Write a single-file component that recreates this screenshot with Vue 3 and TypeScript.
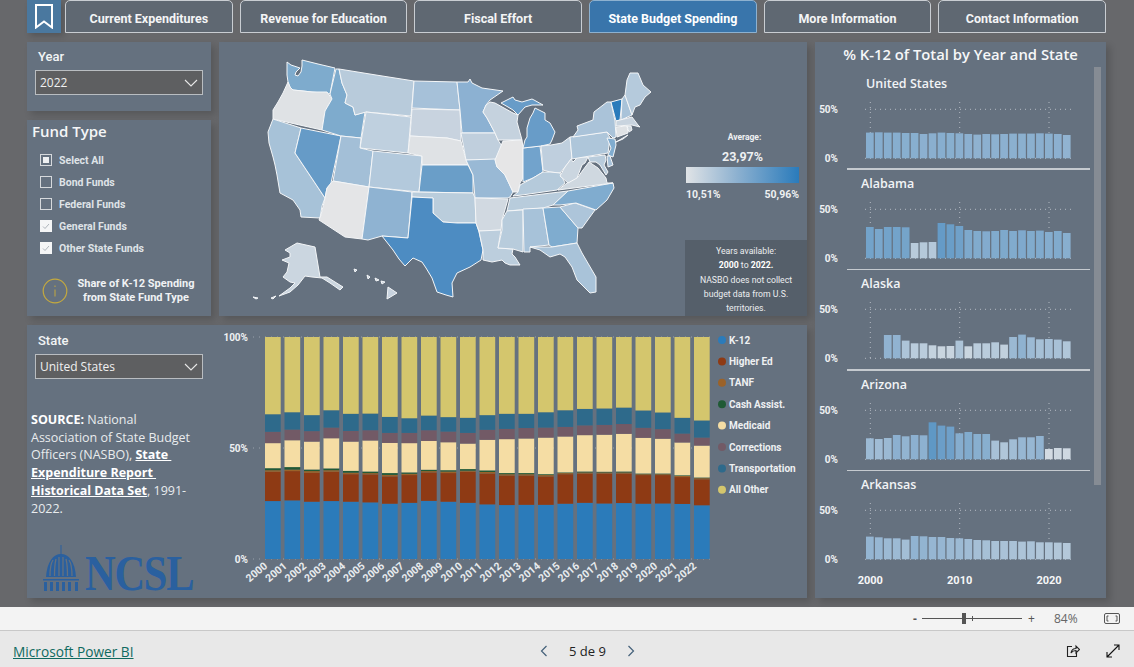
<template>
  <div class="page">
    <main class="report">
      <nav class="tabs">
        <button class="bookmark" aria-label="Bookmarks">
          <svg width="18" height="25" viewBox="0 0 18 25"><path d="M1 1h16v22.5l-8-6-8 6z" fill="none" stroke="#fff" stroke-width="2" /></svg>
        </button>
        <button v-for="tab in tabs" :key="tab" class="tab" :class="{ active: tab === 'State Budget Spending' }">{{ tab }}</button>
      </nav>

      <div class="body">
        <div class="left">
          <div class="top-row">
            <aside class="filters">
              <section class="panel year">
                <label class="slicer-label">Year</label>
                <div class="select">
                  <span>2022</span>
                  <svg width="14" height="8" viewBox="0 0 14 8"><path d="M1 1l6 6 6-6" fill="none" stroke="#e8e8e8" stroke-width="1.1" /></svg>
                </div>
              </section>
              <section class="panel funds">
                <h2>Fund Type</h2>
                <ul>
                  <li v-for="f in funds" :key="f.name">
                    <span class="box" :class="f.state">
                      <svg v-if="f.state === 'checked'" width="12" height="12" viewBox="0 0 12 12"><path d="M3 6.5l2 2 4-4.5" fill="none" stroke="#9aa2aa" stroke-width="0.8" /></svg>
                    </span>
                    {{ f.name }}
                  </li>
                </ul>
                <div class="info">
                  <svg width="26" height="26" viewBox="0 0 26 26">
                    <circle cx="13" cy="13" r="11.8" fill="none" stroke="#c4a93f" stroke-width="1.2" />
                    <path d="M13 11.5v7M13 7.5v1.5" stroke="#c4a93f" stroke-width="1" />
                  </svg>
                  <p>Share of K-12 Spending<br />from State Fund Type</p>
                </div>
              </section>
            </aside>

            <section class="panel map">
              <svg class="us" width="588" height="274" viewBox="219 42 588 274">
                <polygon v-for="s in states" :key="s.id" :points="s.pts" :fill="s.fill" stroke="#f4f6f8" stroke-width="1" stroke-linejoin="round" />
              </svg>
              <div class="legend">
                <div class="avg-label">Average:</div>
                <div class="avg">23,97%</div>
                <div class="ramp"></div>
                <div class="ramp-labels"><span>10,51%</span><span>50,96%</span></div>
              </div>
              <div class="note">
                Years available:<br />
                <b>2000</b> to <b>2022.</b><br />
                NASBO does not collect budget data from U.S. territories.
              </div>
            </section>
          </div>

          <section class="panel bottom">
            <div class="state-col">
              <label class="slicer-label">State</label>
              <div class="select">
                <span>United States</span>
                <svg width="14" height="8" viewBox="0 0 14 8"><path d="M1 1l6 6 6-6" fill="none" stroke="#e8e8e8" stroke-width="1.1" /></svg>
              </div>
              <p class="source">
                <b>SOURCE:</b> National Association of State Budget Officers (NASBO), <a href="#"><b>State&nbsp; Expenditure Report&nbsp; Historical Data Set</b></a>, 1991-2022.
              </p>
              <div class="logo">
                <svg width="36" height="46" viewBox="0 0 36 46">
                  <path d="M17.5 0h1v10h-1z" fill="#2a609f" />
                  <path d="M18 9c-8 0-14 8-15 23h30c-1-15-7-23-15-23z" fill="#2a609f" />
                  <path d="M7 31c0-8 1-13 3-16M11.5 31c0-8 .5-13 1.5-17M16 31V12M20 31V12M24.5 31c0-8-.5-13-1.5-17M29 31c0-8-1-13-3-16" stroke="#65717f" stroke-width="1.3" fill="none" />
                  <path d="M0 34h36v1.5H0zM1 37h3v9H1zM7 37h3v9H7zM13 37h3v9h-3zM19 37h3v9h-3zM25 37h3v9h-3zM32 37h3v9h-3z" fill="#2a609f" />
                </svg>
                <span>NCSL</span>
              </div>
            </div>

            <svg class="stack" width="585" height="273" viewBox="222 325 585 273">
              <g v-for="t in stackTicks" :key="t.label">
                <text x="248" :y="t.y + 3.5" text-anchor="end" class="axis">{{ t.label }}</text>
                <line x1="253" :x2="712" :y1="t.y" :y2="t.y" stroke="#9aa3ad" stroke-width="1" stroke-dasharray="1 5" />
              </g>
              <g v-for="(bar, i) in stackBars" :key="bar.year">
                <rect v-for="(seg, j) in bar.segs" :key="j" :x="seg.x" :y="seg.y" width="15.7" :height="seg.h" :fill="seg.fill" />
                <text class="year-label" text-anchor="end" :transform="`translate(${268 + i * 19.5} 567) rotate(-40)`">{{ bar.year }}</text>
              </g>
              <g v-for="(l, i) in legend" :key="l.name">
                <circle cx="722" :cy="340 + i * 21.4" r="4" :fill="l.color" />
                <text x="729" :y="343.5 + i * 21.4" class="axis">{{ l.name }}</text>
              </g>
            </svg>
          </section>
        </div>

        <section class="panel multiples">
          <h2>% K-12 of Total by Year and State</h2>
          <div class="scrollbar"></div>
          <div class="list">
            <article v-for="(r, n) in rows" :key="r.name" class="row">
              <h3 :class="{ first: n === 0 }">{{ r.name }}</h3>
              <svg width="279" height="72" viewBox="0 0 279 72">
                <text x="23" y="20" text-anchor="end" class="axis">50%</text>
                <text x="23" y="69" text-anchor="end" class="axis">0%</text>
                <line x1="50" x2="258" y1="16.3" y2="16.3" class="dots" />
                <line v-for="x in gridX" :key="x" :x1="x" :x2="x" y1="9" y2="65" class="dots" />
                <line x1="50" x2="258" y1="65.3" y2="65.3" class="dots" />
                <template v-for="(h, i) in r.bars" :key="i">
                  <rect v-if="h > 0" :x="51 + i * 8.95" :y="65.3 - h" width="7.7" :height="h" :fill="barColor(h)" />
                </template>
              </svg>
              <div v-if="n < rows.length - 1" class="rule"></div>
            </article>
          </div>
          <div class="x-axis"><span>2000</span><span>2010</span><span>2020</span></div>
        </section>
      </div>
    </main>

    <div class="zoombar">
      <span class="minus">-</span>
      <div class="track"><i class="tick"></i><i class="thumb"></i></div>
      <span class="plus">+</span>
      <span class="pct">84%</span>
      <svg width="16" height="11" viewBox="0 0 16 11">
        <rect x="0.5" y="0.5" width="15" height="10" rx="1.5" fill="none" stroke="#555" />
        <path d="M4.5 3H3v5h1.5M11.5 3H13v5h-1.5" fill="none" stroke="#555" />
      </svg>
    </div>

    <footer class="footer">
      <a href="#" class="brand">Microsoft Power BI</a>
      <div class="pager">
        <svg width="8" height="12" viewBox="0 0 8 12"><path d="M6.500 1l-5 5 5 5" fill="none" stroke="#44617a" stroke-width="1.2" /></svg>
        <span>5 de 9</span>
        <svg width="8" height="12" viewBox="0 0 8 12"><path d="M1.500 1l5 5-5 5" fill="none" stroke="#44617a" stroke-width="1.2" /></svg>
      </div>
      <div class="actions">
        <svg width="14" height="14" viewBox="0 0 14 14">
          <path d="M6 2.500H1.500v10h9V9" fill="none" stroke="#222" stroke-width="1.1" />
          <path d="M5 9c.5-3 2.500-4.500 5-4.500V2l3.500 3.500L10 9V6.500C8 6.500 6 7.500 5 9z" fill="none" stroke="#222" stroke-width="1.1" />
        </svg>
        <svg width="14" height="14" viewBox="0 0 14 14">
          <path d="M1 13L13 1M8 1h5v5M1 8v5h5" fill="none" stroke="#111" stroke-width="1.1" />
        </svg>
      </div>
    </footer>
  </div>
</template>

<script setup lang="ts">
const tabs = [
  "Current Expenditures",
  "Revenue for Education",
  "Fiscal Effort",
  "State Budget Spending",
  "More Information",
  "Contact Information",
];

const funds = [
  { name: "Select All", state: "partial" },
  { name: "Bond Funds", state: "" },
  { name: "Federal Funds", state: "" },
  { name: "General Funds", state: "checked" },
  { name: "Other State Funds", state: "checked" },
];

// outlines are in page pixels, the svg viewBox starts at the panel corner
const states = [
  { id: "WA", fill: "#7eabcd", pts: "287,62 291,65 297,67 300,68 296,72 295,75 298,76 301,72 302,66 302,60 318,64 335,68 330,94 322,93 312,92 303,91 293,90 290,87 288,82 287,75" },
  { id: "OR", fill: "#dfe2e5", pts: "288,82 290,87 293,90 303,91 312,92 327,92 332,99 325,111 322,130 273,119 273,110 278,102 283,93" },
  { id: "CA", fill: "#a7c2d8", pts: "273,119 301,128 295,153 325,198 322,206 320,218 301,217 300,210 293,200 280,193 277,175 275,165 273,157 269,143 268,132" },
  { id: "NV", fill: "#669bc7", pts: "301,128 341,136 331,183 327,188 325,198 295,153" },
  { id: "ID", fill: "#7eabcd", pts: "336,69 339,69 342,83 347,95 345,103 353,107 355,115 365,112 361,138 341,136 322,130 325,111 332,99 330,94" },
  { id: "MT", fill: "#b8cbdb", pts: "339,69 376,75 414,81 411,116 366,112 355,115 353,107 345,103 347,95 342,83" },
  { id: "WY", fill: "#bfd0df", pts: "366,112 411,117 408,153 360,148" },
  { id: "UT", fill: "#a3bfd7", pts: "341,136 361,138 360,148 373,151 369,187 333,181" },
  { id: "CO", fill: "#b3c9dc", pts: "373,151 422,156 419,192 369,187" },
  { id: "AZ", fill: "#e4e5e7", pts: "333,181 369,187 362,239 345,237 319,220 321,215 325,198 327,188" },
  { id: "NM", fill: "#8fb3d2", pts: "369,187 412,192 408,238 382,236 368,240 362,239" },
  { id: "ND", fill: "#a6c1d9", pts: "414,81 457,82 460,110 412,108" },
  { id: "SD", fill: "#c8d3df", pts: "412,109 460,110 461,133 461,141 447,138 410,136" },
  { id: "NE", fill: "#dfe2e5", pts: "410,136 447,138 461,141 466,160 468,165 422,165 422,156 408,153" },
  { id: "KS", fill: "#6a9ec8", pts: "422,165 468,165 473,175 473,193 419,192" },
  { id: "OK", fill: "#bacddc", pts: "412,192 473,193 475,198 476,223 457,223 443,222 433,213 433,198 412,197" },
  { id: "TX", fill: "#4d8cc2", pts: "412,197 433,198 433,213 443,222 457,223 476,223 479,232 483,250 481,260 470,267 457,273 452,283 453,297 446,295 437,292 432,278 426,268 422,262 413,258 405,266 399,259 393,250 382,236 408,238" },
  { id: "MN", fill: "#8cb1d2", pts: "457,82 468,82 470,79 472,83 482,88 503,91 490,100 486,105 483,112 487,118 495,133 462,133 460,110" },
  { id: "IA", fill: "#c0cfdd", pts: "461,133 495,133 498,140 503,148 495,160 466,160" },
  { id: "MO", fill: "#99b9d5", pts: "466,160 495,159 497,167 505,175 513,192 510,197 508,198 475,198 473,175" },
  { id: "AR", fill: "#d1d9e1", pts: "475,198 508,199 502,220 501,230 479,231 476,223" },
  { id: "LA", fill: "#bccedd", pts: "479,231 501,230 498,248 513,249 512,254 515,257 520,265 510,265 505,263 502,260 492,262 483,260 483,250" },
  { id: "WI", fill: "#c5d2de", pts: "486,105 490,102 495,103 513,113 518,115 517,122 522,140 503,140 498,140 495,133 487,118 483,112" },
  { id: "IL", fill: "#e6e6e7", pts: "503,141 522,140 523,148 523,178 520,183 518,192 513,192 505,175 497,167 495,160" },
  { id: "IN", fill: "#72a3cc", pts: "523,148 540,146 543,172 533,178 523,182" },
  { id: "MIU", fill: "#689cc8", pts: "501,103 513,97 515,100 522,102 532,99 534,100 543,105 532,105 525,107 518,115 513,110 508,107" },
  { id: "MIL", fill: "#689cc8", pts: "527,137 527,128 530,118 533,113 535,108 545,113 545,120 550,123 555,132 552,140 550,144 541,146 523,148 525,140" },
  { id: "OH", fill: "#bfcfde", pts: "541,146 551,145 562,143 570,137 572,158 565,167 560,173 550,172 543,170" },
  { id: "KY", fill: "#b5cadb", pts: "520,185 533,178 543,172 550,172 560,173 565,183 557,190 522,195 513,196 518,192" },
  { id: "TN", fill: "#b8ccdc", pts: "510,198 568,191 553,205 543,208 507,211" },
  { id: "MS", fill: "#b8ccdc", pts: "507,211 523,210 523,252 513,249 498,248 502,230 502,220" },
  { id: "AL", fill: "#a7c2d9", pts: "523,209 543,208 549,245 530,247 530,252 524,252" },
  { id: "GA", fill: "#7faccf", pts: "543,208 560,207 578,228 577,243 552,247 549,245" },
  { id: "FL", fill: "#a9c3d9", pts: "530,247 552,247 577,243 582,253 589,265 596,277 596,292 590,293 584,287 577,280 572,267 565,257 560,254 550,257 540,250" },
  { id: "SC", fill: "#adc5da", pts: "560,207 575,203 595,210 582,228 578,228" },
  { id: "NC", fill: "#80accf", pts: "553,205 568,191 613,183 614,188 607,200 596,210 576,203 560,205" },
  { id: "VA", fill: "#cfd8e0", pts: "558,190 567,183 578,177 583,170 589,162 598,168 606,178 607,183 613,183" },
  { id: "WV", fill: "#cbd6e0", pts: "560,176 565,167 571,159 573,162 578,157 588,157 585,163 582,165 577,178 568,183" },
  { id: "PA", fill: "#aec6da", pts: "570,137 607,132 610,138 608,153 572,159" },
  { id: "NY", fill: "#aac3d9", pts: "573,137 578,130 577,126 593,120 594,112 607,102 611,102 615,121 616,137 613,138 607,132" },
  { id: "NJ", fill: "#80accf", pts: "607,138 615,139 616,145 613,157 608,155 611,148" },
  { id: "MD", fill: "#b9ccdc", pts: "588,157 605,155 606,160 604,165 608,172 606,175 600,165 596,162 590,162" },
  { id: "DE", fill: "#a6c1d9", pts: "607,156 610,156 613,165 608,167" },
  { id: "VT", fill: "#2a7bbb", pts: "611,102 622,99 620,120 616,121" },
  { id: "NH", fill: "#a9c3d9", pts: "622,99 625,95 632,115 621,120" },
  { id: "ME", fill: "#b5cadc", pts: "625,95 627,80 630,73 638,73 643,85 651,92 645,97 640,105 635,107 632,115" },
  { id: "MA", fill: "#c9d4df", pts: "616,121 632,117 638,125 640,127 632,125 616,126" },
  { id: "CT", fill: "#dfe2e5", pts: "616,127 627,126 628,133 617,137" },
  { id: "RI", fill: "#d5dce2", pts: "627,126 631,126 632,130 629,132" },
  { id: "LI", fill: "#aac3d9", pts: "616,142 628,135 623,139" },
  { id: "AK", fill: "#cbd6e0", pts: "285,250 297,243 315,247 320,277 327,277 343,287 340,290 330,283 322,278 312,277 305,276 298,285 290,292 279,296 290,288 295,283 290,282 283,277 287,272 289,263 282,260 290,257 290,253" },
  { id: "AK2", fill: "#cbd6e0", pts: "253,297 258,298 256,299" },
  { id: "AK3", fill: "#cbd6e0", pts: "271,298 276,296 273,299" },
  { id: "HI1", fill: "#c8d3df", pts: "388,287 397,293 387,299" },
  { id: "HI2", fill: "#c8d3df", pts: "354,269 357,270 355,272" },
  { id: "HI3", fill: "#c8d3df", pts: "367,275 370,277 368,279" },
  { id: "HI4", fill: "#c8d3df", pts: "375,278 379,280 376,281" },
  { id: "HI5", fill: "#c8d3df", pts: "381,281 385,282 382,284" },
];

const stackColors = ["#2b7bba", "#8e3a14", "#9b6229", "#205a35", "#f5dda4", "#725a66", "#2e6a8b", "#d4c66d"];

const legend = [
  "K-12",
  "Higher Ed",
  "TANF",
  "Cash Assist.",
  "Medicaid",
  "Corrections",
  "Transportation",
  "All Other",
].map((name, i) => ({ name, color: stackColors[i] }));

// cumulative top of each band, percent
const tops = [
  [26.1, 39.3, 40, 40.9, 52.2, 57.3, 65.2],
  [26.4, 39.6, 40.3, 41.4, 53.5, 58.3, 66.1],
  [25.8, 38.8, 39.6, 40.3, 52.9, 57.6, 64.8],
  [26.1, 39.3, 40, 40.8, 54.4, 59.2, 67],
  [25.8, 38.2, 38.9, 39.7, 52.9, 57.7, 65.4],
  [25.5, 38.1, 38.7, 39.4, 53.4, 58, 65.5],
  [24.9, 37.2, 37.9, 38.7, 52.3, 56.8, 64],
  [25.3, 37.8, 38.4, 39, 52.2, 56.8, 63.4],
  [26.2, 39, 39.6, 40.2, 53.2, 58, 64.6],
  [25.8, 38.7, 39.4, 40, 52.6, 57.4, 63.9],
  [25.3, 39.3, 39.8, 40.5, 52, 56.8, 63.6],
  [24.6, 38.5, 39.2, 39.9, 53.7, 58.2, 64.8],
  [24.3, 37.6, 38.2, 38.7, 54, 58.6, 65.4],
  [24.4, 37.6, 38.2, 38.7, 54.3, 59, 65.4],
  [24.4, 37.2, 37.8, 38.2, 54.7, 59.2, 66.1],
  [24.9, 38.2, 38.7, 39, 55.2, 59.5, 67],
  [25.3, 38.5, 39, 39.4, 55.8, 60.2, 67.6],
  [25, 38.5, 39, 39.3, 56, 60.4, 67.8],
  [25.2, 38.5, 39, 39.4, 56.4, 60.8, 68.2],
  [24.9, 37.8, 38.2, 38.5, 54.6, 59.1, 66.9],
  [25, 37.8, 38.2, 38.5, 54.2, 58.5, 66],
  [24.8, 36.9, 37.4, 37.7, 52.5, 56.5, 63.6],
  [24.2, 35.9, 36.4, 36.7, 51.1, 54.7, 62.4],
];

const BASE_Y = 559;
const PX_PER_PCT = 2.22;

const stackBars = tops.map((row, i) => {
  const bounds = [0, ...row, 100];
  const segs = stackColors.map((fill, j) => ({
    fill,
    x: 265 + i * 19.5,
    y: BASE_Y - bounds[j + 1] * PX_PER_PCT,
    h: (bounds[j + 1] - bounds[j]) * PX_PER_PCT,
  }));
  return { year: 2000 + i, segs };
});

const stackTicks = [
  { label: "100%", y: 337 },
  { label: "50%", y: 448 },
  { label: "0%", y: 559 },
];

const gridX = [55.3, 144.7, 234];

// bar heights in pixels, 48.5px is the 50% line
const rows = [
  { name: "United States", bars: [25.7, 26, 25.7, 25.7, 25.3, 25.3, 24.3, 25, 25.7, 25.3, 25, 24.3, 23.7, 24.3, 24, 24.3, 24.7, 24.7, 24.7, 25, 24.7, 24.3, 23.3] },
  { name: "Alabama", bars: [31.3, 29.3, 31.3, 31.3, 31, 15.3, 16, 16.3, 35.3, 34, 32.3, 28.3, 27.3, 27, 27.3, 28.3, 27.3, 28, 27.3, 27.7, 26.3, 27.3, 25.3] },
  { name: "Alaska", bars: [0, 0, 23.3, 23.3, 17.7, 15, 15, 13, 12, 12.3, 17.7, 12, 15, 15, 16, 13.7, 21.3, 23.7, 21, 19, 19.3, 18.7, 17] },
  { name: "Arizona", bars: [21, 20.3, 21.3, 24.3, 23, 24.3, 24, 37, 33.7, 32.7, 26, 27.3, 25.3, 25.3, 18.7, 17, 20, 22, 22, 23.3, 10.3, 11.3, 11] },
  { name: "Arkansas", bars: [22.7, 22, 21, 21, 19.7, 23.3, 23, 22.3, 22.3, 21.3, 21, 20.3, 19.3, 19, 18.3, 18.3, 18.3, 17.7, 18, 17, 17, 16.7, 16.3] },
];

const ramp: [number, number[]][] = [
  [10, [211, 219, 226]],
  [24, [141, 177, 208]],
  [36, [99, 154, 198]],
  [50, [42, 123, 187]],
];

const barColor = (h: number): string => {
  let k = 0;
  while (k < ramp.length - 2 && h > ramp[k + 1][0]) k++;
  const [a, ca] = ramp[k];
  const [b, cb] = ramp[k + 1];
  const t = Math.min(1, Math.max(0, (h - a) / (b - a)));
  const c = ca.map((v, i) => Math.round(v + (cb[i] - v) * t));
  return `rgb(${c[0]},${c[1]},${c[2]})`;
};
</script>

<style>
html,
body {
  margin: 0;
  overflow: hidden;
}
</style>

<style scoped>
.page {
  width: 1134px;
  height: 667px;
  display: flex;
  flex-direction: column;
  font-family: Roboto, "Liberation Sans", sans-serif;
  background: #e8e8e8;
}
.report {
  height: 607px;
  box-sizing: border-box;
  padding: 0 28px 0 27px;
  background: #67686b;
  display: flex;
  flex-direction: column;
  gap: 9px;
}
.tabs {
  display: flex;
  gap: 7px;
  height: 33px;
}
.tab,
.bookmark {
  font: inherit;
  padding: 0;
  margin: 0;
}
.bookmark {
  width: 34px;
  margin-right: -3px;
  background: #4a789f;
  border: 0;
  display: flex;
  align-items: center;
  justify-content: center;
  box-shadow: 3px 3px 6px rgba(0, 0, 0, 0.18);
}
.tab {
  flex: 1;
  padding-top: 3px;
  background: #5f6872;
  color: #f4f5f6;
  font-size: 12.5px;
  font-weight: 700;
  border: 1px solid #c9cdd2;
  border-radius: 5px 5px 0 0;
}
.tab.active {
  background: #3975ab;
  border-color: #8db1d0;
  color: #fff;
}
.body {
  display: flex;
  gap: 8px;
  height: 556px;
}
.left {
  width: 780px;
  display: flex;
  flex-direction: column;
  gap: 9px;
}
.top-row {
  display: flex;
  gap: 8px;
  height: 274px;
}
.filters {
  width: 184px;
  display: flex;
  flex-direction: column;
  gap: 9px;
}
.panel {
  background: #65717f;
  box-shadow: 4px 4px 7px rgba(0, 0, 0, 0.16);
}
.year {
  height: 69px;
  box-sizing: border-box;
  padding: 6px 8px 0;
}
.slicer-label {
  display: block;
  height: 16px;
  margin: 1px 0 -1px 3px;
  color: #f2f4f5;
  font-size: 13px;
  font-weight: 500;
  line-height: 16px;
}
.select {
  margin-top: 6px;
  height: 25px;
  box-sizing: border-box;
  border: 1.5px solid #b9bdc1;
  background: #5e5f61;
  color: #f0f0f0;
  padding: 0 4px;
  font-family: "Open Sans", sans-serif;
  font-size: 12px;
  display: flex;
  align-items: center;
  justify-content: space-between;
}
.funds {
  flex: 1;
  padding: 1px 5px 0;
}
.funds h2 {
  margin: 0;
  color: #f4f6f7;
  font-family: "Open Sans", sans-serif;
  font-size: 15px;
  font-weight: 600;
  line-height: 20px;
}
.funds ul {
  list-style: none;
  margin: 8px 0 0 8px;
  padding: 0;
}
.funds li {
  height: 22px;
  display: flex;
  align-items: center;
  gap: 7px;
  color: #dfe3e7;
  font-size: 10.5px;
  font-weight: 700;
}
.box {
  width: 12px;
  height: 12px;
  box-sizing: border-box;
  border: 1px solid #d6d9dc;
  display: flex;
  align-items: center;
  justify-content: center;
}
.box.checked {
  background: #f4f5f6;
  border: 0;
}
.box.partial::after {
  content: "";
  width: 6px;
  height: 6px;
  background: #eef0f2;
}
.info {
  margin: 18px 0 0 10px;
  display: flex;
  align-items: center;
  gap: 6px;
}
.info p {
  margin: 0 8px 0 0;
  flex: 1;
  color: #f0f2f4;
  font-size: 11px;
  font-weight: 700;
  line-height: 14px;
  text-align: center;
}
.map {
  flex: 1;
  position: relative;
  overflow: hidden;
}
.us {
  display: block;
}
.legend {
  position: absolute;
  left: 467px;
  top: 89px;
  width: 113px;
  color: #eef0f2;
  text-align: center;
}
.avg-label {
  font-size: 8.5px;
  font-weight: 700;
  line-height: 12px;
  transform: translateX(2px);
}
.avg {
  margin-top: 6px;
  font-size: 12.5px;
  font-weight: 700;
  line-height: 16px;
}
.ramp {
  margin-top: 2px;
  height: 16px;
  background: linear-gradient(90deg, #e0e3e6 0%, #8db1d0 45%, #2a7bbb 100%);
}
.ramp-labels {
  margin-top: 5px;
  display: flex;
  justify-content: space-between;
  font-size: 10.5px;
  font-weight: 700;
}
.note {
  position: absolute;
  right: 0;
  bottom: 0;
  width: 122px;
  height: 76px;
  box-sizing: border-box;
  padding: 4px 6px 0;
  background: #555f6a;
  color: #eceef0;
  font-size: 8.7px;
  line-height: 14.3px;
  text-align: center;
}
.note b {
  color: #fff;
}
.bottom {
  flex: 1;
  display: flex;
  position: relative;
}
.state-col {
  width: 195px;
  box-sizing: border-box;
  padding: 7px 0 0 8px;
  display: flex;
  flex-direction: column;
}
.state-col .select {
  width: 168px;
}
.source {
  margin: 32px 0 0 -4px;
  width: 172px;
  color: #e9ecee;
  font-family: "Open Sans", sans-serif;
  font-size: 12.5px;
  line-height: 17.7px;
}
.source b {
  color: #fff;
}
.source a {
  color: #fff;
}
.logo {
  margin: 28px 0 0 8px;
  display: flex;
  align-items: flex-end;
  gap: 6px;
}
.logo span {
  color: #2a609f;
  font-family: "Liberation Serif", serif;
  font-size: 50px;
  font-weight: 700;
  line-height: 36px;
  letter-spacing: -1.5px;
  transform: scaleX(0.85);
  transform-origin: left bottom;
}
.stack {
  display: block;
}
.axis {
  fill: #eef0f2;
  font-size: 10px;
  font-weight: 700;
}
.year-label {
  fill: #e8ebee;
  font-size: 10.5px;
  font-weight: 700;
}
.multiples {
  flex: 1;
  position: relative;
  display: flex;
  flex-direction: column;
}
.multiples h2 {
  margin: 0;
  height: 27.6px;
  box-sizing: border-box;
  color: #f6f7f8;
  font-family: "Open Sans", sans-serif;
  font-size: 14.8px;
  font-weight: 600;
  line-height: 24px;
  text-align: center;
}
.scrollbar {
  position: absolute;
  left: 279px;
  top: 25px;
  width: 7px;
  height: 418px;
  background: #868c94;
}
.row {
  height: 100.4px;
  position: relative;
}
.row h3 {
  margin: 0;
  height: 23px;
  box-sizing: border-box;
  padding: 4px 0 0 46px;
  color: #f2f4f6;
  font-family: "Open Sans", sans-serif;
  font-size: 12.5px;
  font-weight: 600;
  line-height: 20px;
}
.row h3.first {
  padding-left: 51px;
}
.row svg {
  display: block;
}
.dots {
  stroke: #b4bbc3;
  stroke-width: 1;
  stroke-dasharray: 1 4;
}
.rule {
  position: absolute;
  left: 32px;
  bottom: 0;
  width: 243px;
  height: 1.5px;
  background: #c5cacf;
}
.x-axis {
  margin: -1px 0 0 10.6px;
  display: grid;
  grid-template-columns: repeat(3, 89.4px);
  color: #f6f7f8;
  font-size: 11px;
  font-weight: 700;
  line-height: 20px;
  text-align: center;
}
.zoombar {
  height: 24px;
  box-sizing: border-box;
  border-bottom: 1px solid #c8c8c8;
  background: #f3f3f3;
  display: flex;
  align-items: center;
  padding-left: 913px;
  color: #555;
  font-family: "Open Sans", sans-serif;
  font-size: 12px;
}
.minus {
  width: 9px;
  font-weight: 700;
}
.track {
  position: relative;
  width: 100px;
  height: 1px;
  background: #555;
}
.tick {
  position: absolute;
  left: 50px;
  top: -2px;
  width: 1px;
  height: 5px;
  background: #555;
}
.thumb {
  position: absolute;
  left: 40px;
  top: -5px;
  width: 4px;
  height: 11px;
  background: #555;
}
.plus {
  width: 26px;
  margin-left: 6px;
}
.pct {
  width: 50px;
  color: #666;
}
.footer {
  flex: 1;
  display: flex;
  align-items: center;
  position: relative;
  padding: 4px 14px 0 13px;
}
.brand {
  color: #0f6a60;
  font-family: "Open Sans", sans-serif;
  font-size: 13.7px;
}
.pager {
  position: absolute;
  left: 540px;
  display: flex;
  align-items: center;
  gap: 21px;
  color: #222;
  font-family: "Open Sans", sans-serif;
  font-size: 13px;
  font-weight: 500;
}
.actions {
  margin-left: auto;
  display: flex;
  gap: 26px;
}
</style>
